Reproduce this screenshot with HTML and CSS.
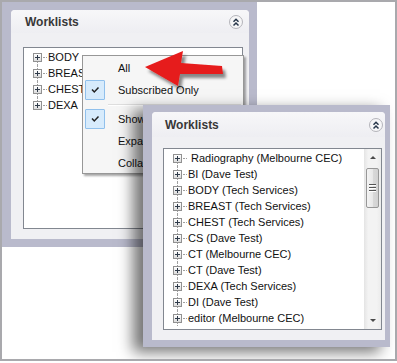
FILE: index.html
```html
<!DOCTYPE html>
<html lang="en">
<head>
    <meta charset="UTF-8">
    <meta name="viewport" content="width=device-width, initial-scale=1.0">
    <title>Worklists</title>
    <link rel="stylesheet" href="styles.css">
</head>
<body>
    <div class="frame">
        <section class="panel panel-back">
            <div class="panel-inner">
                <header class="panel-head">
                    <h2>Worklists</h2>
                    <span class="collapse">
                        <svg width="14" height="14" viewBox="0 0 14 14"><circle cx="7" cy="7" r="6.5" fill="#f6f6f7" stroke="#b4b4ba"/><path d="M4.5 6.8 7 4.3 9.5 6.8M4.5 10.5 7 8 9.5 10.5" fill="none" stroke="#27364a" stroke-width="1.5"/></svg>
                    </span>
                </header>
                <div class="panel-body">
                    <div class="tree">
                        <ul class="tree-list">
                            <li class="node first"><span class="expander"></span><span class="connector"></span>BODY</li>
                            <li class="node"><span class="expander"></span><span class="connector"></span>BREAST</li>
                            <li class="node"><span class="expander"></span><span class="connector"></span>CHEST</li>
                            <li class="node last"><span class="expander"></span><span class="connector"></span>DEXA</li>
                        </ul>
                    </div>
                </div>
            </div>
        </section>

        <ul class="menu">
            <li class="menu-item"><span class="check"></span>All</li>
            <li class="menu-item"><span class="check on"></span>Subscribed Only</li>
            <li class="menu-sep"></li>
            <li class="menu-item"><span class="check on"></span>Show Empty</li>
            <li class="menu-item"><span class="check"></span>Expand All</li>
            <li class="menu-item"><span class="check"></span>Collapse All</li>
        </ul>

        <svg class="arrow" width="95" height="50" viewBox="140 45 95 50">
            <defs>
                <filter id="arrowShadow" x="-20%" y="-30%" width="150%" height="170%">
                    <feDropShadow dx="3" dy="4" stdDeviation="1.5" flood-color="#000" flood-opacity="0.45"/>
                </filter>
            </defs>
            <polygon points="145,67 183,51 181,63 222,66 223,74 180,74 178,86" fill="#e61b1b" filter="url(#arrowShadow)"/>
        </svg>

        <section class="panel panel-front">
            <div class="panel-inner">
                <header class="panel-head">
                    <h2>Worklists</h2>
                    <span class="collapse">
                        <svg width="14" height="14" viewBox="0 0 14 14"><circle cx="7" cy="7" r="6.5" fill="#f6f6f7" stroke="#b4b4ba"/><path d="M4.5 6.8 7 4.3 9.5 6.8M4.5 10.5 7 8 9.5 10.5" fill="none" stroke="#27364a" stroke-width="1.5"/></svg>
                    </span>
                </header>
                <div class="panel-body">
                    <div class="tree">
                        <ul class="tree-list">
                            <li class="node first"><span class="expander"></span><span class="connector"></span>&nbsp;Radiography (Melbourne CEC)</li>
                            <li class="node"><span class="expander"></span><span class="connector"></span>BI (Dave Test)</li>
                            <li class="node"><span class="expander"></span><span class="connector"></span>BODY (Tech Services)</li>
                            <li class="node"><span class="expander"></span><span class="connector"></span>BREAST (Tech Services)</li>
                            <li class="node"><span class="expander"></span><span class="connector"></span>CHEST (Tech Services)</li>
                            <li class="node"><span class="expander"></span><span class="connector"></span>CS (Dave Test)</li>
                            <li class="node"><span class="expander"></span><span class="connector"></span>CT (Melbourne CEC)</li>
                            <li class="node"><span class="expander"></span><span class="connector"></span>CT (Dave Test)</li>
                            <li class="node"><span class="expander"></span><span class="connector"></span>DEXA (Tech Services)</li>
                            <li class="node"><span class="expander"></span><span class="connector"></span>DI (Dave Test)</li>
                            <li class="node"><span class="expander"></span><span class="connector"></span>editor (Melbourne CEC)</li>
                        </ul>
                        <div class="scrollbar">
                            <div class="sb-button sb-up"></div>
                            <div class="sb-track"><div class="sb-thumb"><span class="sb-grip"></span></div></div>
                            <div class="sb-button sb-down"></div>
                        </div>
                    </div>
                </div>
            </div>
        </section>
    </div>
</body>
</html>
```

FILE: styles.css
```css
body {
    margin: 0;
    background-color: #fff;
    font-family: "Liberation Sans", Arial, sans-serif;
    font-size: 11px;
    color: #111;
}
ul {
    list-style: none;
    margin: 0;
    padding: 0;
}
.frame {
    position: relative;
    width: 397px;
    height: 361px;
    box-sizing: border-box;
    border: 2px solid #a9a9ad;
    background: #fff;
    overflow: hidden;
}

/* panels */
.panel {
    box-sizing: border-box;
    display: flex;
    background-color: #b9bacc;
}
.panel-inner {
    flex: 1;
    display: flex;
    flex-direction: column;
    background: #f0f0f3;
    border-radius: 4px 4px 0 0;
}
.panel-head {
    display: flex;
    align-items: center;
    justify-content: space-between;
    background: linear-gradient(#f7f7f9, #eeeef2);
    border-radius: 4px 4px 0 0;
}
.panel-head h2 {
    margin: 0;
    font-size: 12px;
    font-weight: bold;
    color: #383838;
}
.collapse {
    display: flex;
}
.panel-body {
    flex: 1;
    display: flex;
}
.panel-back {
    width: 255px;
    height: 245px;
    padding: 8px 8px 8px 9px;
}
.panel-back .panel-head {
    height: 23px;
    padding: 0 6px 0 14px;
}
.panel-back .panel-body {
    padding: 14px 6px 10px 12px;
}
.panel-front {
    position: absolute;
    left: 141px;
    top: 103px;
    width: 247px;
    height: 242px;
    padding: 7px 5px 7px 9px;
    box-shadow: -10px 5px 14px rgba(0, 0, 0, 0.55);
}
.panel-front .panel-head {
    height: 25px;
    padding: 0 2px 0 13px;
}
.panel-front .panel-body {
    padding: 11px 3px 10px 11px;
}

/* tree */
.tree {
    flex: 1;
    display: flex;
    background: #fff;
    border: 1px solid #828790;
    overflow: hidden;
}
.tree-list {
    flex: 1;
    padding: 1px 0 0 9px;
    overflow: hidden;
}
.node {
    position: relative;
    display: flex;
    align-items: center;
    height: 16px;
    white-space: nowrap;
}
.node::before {
    content: "";
    position: absolute;
    left: 4px;
    top: 0;
    bottom: 0;
    border-left: 1px dotted #a0a0a0;
}
.node.first::before {
    top: 8px;
}
.node.last::before {
    bottom: 8px;
}
.expander {
    position: relative;
    flex: none;
    width: 9px;
    height: 9px;
    box-sizing: border-box;
    border: 1px solid #919191;
    background:
        linear-gradient(#2f3b4a, #2f3b4a) center / 5px 1px no-repeat,
        linear-gradient(#2f3b4a, #2f3b4a) center / 1px 5px no-repeat,
        linear-gradient(#fff, #dcdcdc);
}
.connector {
    flex: none;
    width: 4px;
    margin: 0 1px;
    border-top: 1px dotted #a0a0a0;
}

/* scrollbar */
.scrollbar {
    flex: none;
    width: 17px;
    display: flex;
    flex-direction: column;
    background: linear-gradient(90deg, #e4e4e4, #f3f3f3 25%, #f3f3f3 75%, #ebebeb);
}
.sb-button {
    height: 17px;
    display: flex;
    align-items: center;
    justify-content: center;
}
.sb-up::after {
    content: "";
    border-left: 3px solid transparent;
    border-right: 3px solid transparent;
    border-bottom: 3px solid #4a4a4a;
}
.sb-down::after {
    content: "";
    border-left: 3px solid transparent;
    border-right: 3px solid transparent;
    border-top: 3px solid #4a4a4a;
}
.sb-track {
    flex: 1;
    padding-top: 2px;
}
.sb-thumb {
    width: 13px;
    height: 40px;
    margin: 0 auto;
    box-sizing: border-box;
    border: 1px solid #979797;
    border-radius: 2px;
    background: linear-gradient(90deg, #f4f4f4, #e8e8e8 50%, #d9d9d9 51%, #d2d2d2);
    display: flex;
    align-items: center;
    justify-content: center;
}
.sb-grip {
    width: 7px;
    height: 8px;
    background: repeating-linear-gradient(#555 0 1px, #fff 1px 2px, transparent 2px 3px);
}

/* context menu */
.menu {
    position: absolute;
    left: 80px;
    top: 53px;
    width: 162px;
    height: 119px;
    box-sizing: border-box;
    padding-top: 1px;
    border: 1px solid #979797;
    background: #f6f6f6;
    box-shadow: 2px 2px 2px rgba(0, 0, 0, 0.35);
    font-size: 11px;
    color: #111;
}
.menu-item {
    display: flex;
    align-items: center;
    height: 22px;
    padding-left: 2px;
    white-space: nowrap;
}
.check {
    flex: none;
    width: 20px;
    height: 20px;
    box-sizing: border-box;
    margin-right: 13px;
}
.check.on {
    border: 1px solid #90c0ec;
    border-radius: 1px;
    background:
        url("data:image/svg+xml,%3Csvg xmlns='http://www.w3.org/2000/svg' width='18' height='18'%3E%3Cpath d='M6 8.5 8.3 11 12.5 6.5' fill='none' stroke='%23222' stroke-width='1.5'/%3E%3C/svg%3E") center no-repeat,
        #d7ebfc;
}
.menu-sep {
    height: 7px;
    margin: 0 2px 0 25px;
    background: linear-gradient(transparent 3px, #dedede 3px 4px, #fff 4px 5px, transparent 5px);
}

/* red pointer */
.arrow {
    position: absolute;
    left: 138px;
    top: 43px;
    overflow: visible;
}
```
